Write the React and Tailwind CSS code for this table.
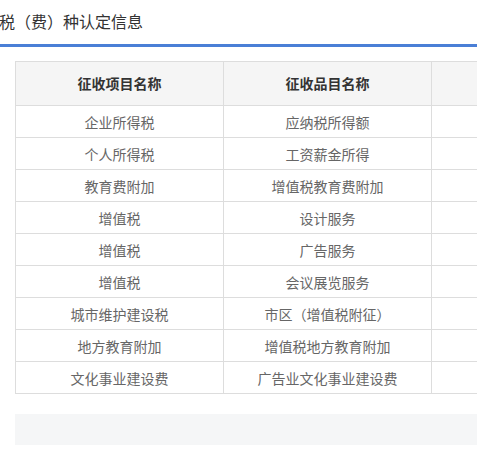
export default function App() {
  const rows = [
    ["企业所得税", "应纳税所得额"],
    ["个人所得税", "工资薪金所得"],
    ["教育费附加", "增值税教育费附加"],
    ["增值税", "设计服务"],
    ["增值税", "广告服务"],
    ["增值税", "会议展览服务"],
    ["城市维护建设税", "市区（增值税附征）"],
    ["地方教育附加", "增值税地方教育附加"],
    ["文化事业建设费", "广告业文化事业建设费"],
  ];

  return (
    <div
      className="w-[477px] h-[454px] overflow-hidden bg-white"
      style={{ fontFamily: '"Microsoft YaHei", "Noto Sans CJK SC", sans-serif' }}
    >
      {/* Title */}
      <div className="h-[44px] flex items-center -ml-[1px] pb-[2px] text-[16px] text-[#333] whitespace-nowrap">
        税（费）种认定信息
      </div>
      <div className="h-[3px] bg-[#4a7fd6]" />

      {/* Table */}
      <div className="pl-[15px] pt-[14px]">
        <table className="table-fixed border-collapse w-[640px] text-[14px]">
          <colgroup>
            <col className="w-[208px]" />
            <col className="w-[208px]" />
            <col className="w-[224px]" />
          </colgroup>
          <thead>
            <tr className="h-[44px] bg-[#f5f5f5]">
              <th className="border border-[#dddddd] font-bold text-[#333] text-center">征收项目名称</th>
              <th className="border border-[#dddddd] font-bold text-[#333] text-center">征收品目名称</th>
              <th className="border border-[#dddddd]"></th>
            </tr>
          </thead>
          <tbody>
            {rows.map((r, i) => (
              <tr key={i} className="h-[32px]">
                <td className="border border-[#dddddd] text-center text-[#666] p-0 leading-none">{r[0]}</td>
                <td className="border border-[#dddddd] text-center text-[#666] p-0 leading-none">{r[1]}</td>
                <td className="border border-[#dddddd] p-0"></td>
              </tr>
            ))}
          </tbody>
        </table>

        {/* Footer bar */}
        <div className="mt-[20px] h-[31px] bg-[#f5f6f7]" />
      </div>
    </div>
  );
}
